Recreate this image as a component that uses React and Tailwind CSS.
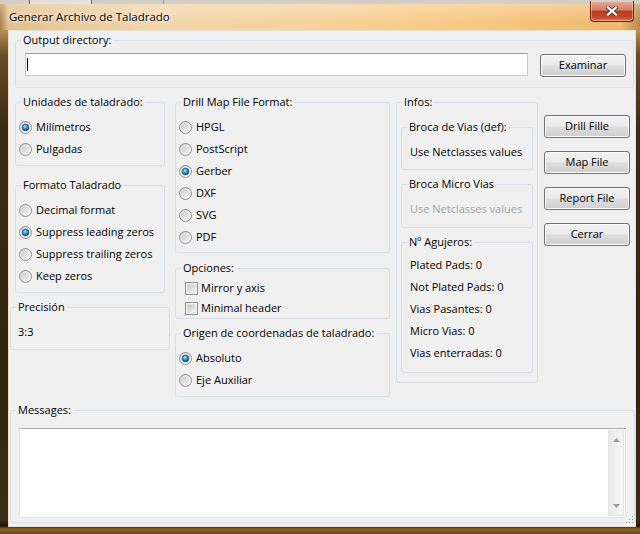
import React from "react";

function Defs() {
  return (
    <svg width="0" height="0" className="absolute">
      <defs>
        <linearGradient id="rb" x1="0" y1="0" x2="1" y2="1">
          <stop offset="0" stopColor="#c4c4c4" />
          <stop offset="1" stopColor="#fbfbfb" />
        </linearGradient>
        <radialGradient id="rd" cx="0.42" cy="0.36" r="0.7">
          <stop offset="0" stopColor="#b4e8ff" />
          <stop offset="0.45" stopColor="#2c96d4" />
          <stop offset="1" stopColor="#0b3a66" />
        </radialGradient>
        <linearGradient id="cb" x1="0" y1="0" x2="1" y2="1">
          <stop offset="0" stopColor="#c3c6cb" />
          <stop offset="1" stopColor="#f6f6f6" />
        </linearGradient>
      </defs>
    </svg>
  );
}

const Radio = ({ checked, label }) => (
  <div className="flex h-[22px] items-center">
    <svg width="13" height="13" viewBox="0 0 13 13" className="shrink-0">
      <circle cx="6.5" cy="6.5" r="6" fill="url(#rb)" stroke="#8e8f8f" />
      <circle cx="6.5" cy="6.5" r="4.7" fill="none" stroke="#ffffff" strokeOpacity="0.6" strokeWidth="0.8" />
      {checked && <circle cx="6.5" cy="6.5" r="3.4" fill="url(#rd)" stroke="#1a4a75" strokeWidth="0.6" />}
    </svg>
    <span className="ml-[4px]">{label}</span>
  </div>
);

const Check = ({ label }) => (
  <div className="flex h-[20px] items-center">
    <svg width="13" height="13" viewBox="0 0 13 13" className="shrink-0">
      <rect x="0.5" y="0.5" width="12" height="12" fill="#f4f4f4" stroke="#8e8f8f" />
      <rect x="2.5" y="2.5" width="8" height="8" fill="url(#cb)" stroke="#d8dadd" strokeWidth="0.6" />
    </svg>
    <span className="ml-[3px]">{label}</span>
  </div>
);

const Btn = ({ children, className = "" }) => (
  <button
    className={
      "flex h-[23px] w-[86px] shrink-0 items-center justify-center rounded-[3px] border border-[#707070] bg-[linear-gradient(180deg,#f2f2f2_0%,#ebebeb_48%,#dddddd_52%,#cfcfcf_100%)] text-black shadow-[inset_0_0_0_1px_#fbfbfb] " +
      className
    }
  >
    {children}
  </button>
);

const Group = ({ label, className = "", children }) => (
  <fieldset className={"shrink-0 rounded-[3px] border border-[#d5dfe5] " + className}>
    <legend className="ml-[5px] h-[16px] px-[2px] leading-[16px]">{label}</legend>
    {children}
  </fieldset>
);

export default function App() {
  return (
    <div className="relative flex h-[534px] w-[640px] flex-col overflow-hidden bg-[linear-gradient(180deg,#dcb781_0px,#b48a55_32px,#6a4b24_55px,#3c2a13_130px,#33240f_380px,#3e2c15_520px,#1f1608_526px,#8a6428_529px,#6a4b1f_534px)] font-['Open_Sans',sans-serif] text-[11px] text-black">
      <Defs />

      {/* window behind, peeking above the title bar */}
      <div className="flex h-[4px] shrink-0 bg-[#d3cec6]">
        <div className="w-[30px] border-r border-[#6a6a6a]" />
        <div className="w-[62px] border-r border-[#6a6a6a] bg-[#e4e1dc]" />
        <div className="w-[72px] border-r border-[#9a9a9a]" />
      </div>

      {/* title bar */}
      <div className="flex h-[26px] shrink-0 items-start rounded-t-[6px] bg-[linear-gradient(180deg,rgba(255,255,255,0.28),rgba(255,255,255,0)_70%),linear-gradient(90deg,#a9804e_0px,#e2c090_8px,#f1d6ac_25%,#f6d29a_50%,#f8c985_72%,#eeb970_97%,#b88a4c_100%)]">
        <span className="ml-[9px] mt-[6px] text-[11.5px] leading-[14px] [text-shadow:0_0_6px_#fff,0_0_3px_#fff]">
          Generar Archivo de Taladrado
        </span>
        <div className="ml-auto mr-[6px] -mt-[3px] flex h-[21px] w-[44px] items-center justify-center rounded-b-[4px] border border-t-0 border-[#6b2414] bg-[linear-gradient(180deg,#e8ab9b_0%,#d77a62_45%,#c0391c_52%,#c44a2a_80%,#d9734d_100%)] shadow-[inset_0_0_0_1px_rgba(255,235,225,0.45)]">
          <svg width="12" height="10" viewBox="0 0 12 10">
            <path d="M2 1.5 L10 8.5 M10 1.5 L2 8.5" stroke="#3b3b3b" strokeWidth="4" strokeLinecap="square" />
            <path d="M2 1.5 L10 8.5 M10 1.5 L2 8.5" stroke="#ffffff" strokeWidth="2.3" strokeLinecap="square" />
          </svg>
        </div>
      </div>

      <div className="flex">
        <div className="w-[8px] shrink-0" />
        {/* client area */}
        <div className="relative flex h-[497px] w-[628px] shrink-0 flex-col border border-[#e9dfcc] bg-[#f0f0f0]">
          <Group label="Output directory:" className="ml-[6px] mt-[1px] w-[619px]">
            <div className="flex h-[39px] items-start pl-[9px] pt-[5px]">
              <div className="flex h-[23px] w-[503px] items-center border border-[#b5cfe7] border-t-[#7fa3c9] bg-white">
                <div className="ml-[1px] h-[13px] w-px bg-black" />
              </div>
              <Btn className="ml-[12px] mt-[1px]">Examinar</Btn>
            </div>
          </Group>

          <div className="mt-[6px] flex items-start">
            {/* units / format / precision */}
            <div className="ml-[6px] flex w-[150px] shrink-0 flex-col items-start">
              <Group label="Unidades de taladrado:" className="w-[150px]">
                <div className="h-[55px] pl-[3px] pt-[6px]">
                  <Radio checked label="Milímetros" />
                  <Radio label="Pulgadas" />
                </div>
              </Group>
              <Group label="Formato Taladrado" className="mt-[11px] w-[150px]">
                <div className="h-[99px] pl-[3px] pt-[6px]">
                  <Radio label="Decimal format" />
                  <Radio checked label="Suppress leading zeros" />
                  <Radio label="Suppress trailing zeros" />
                  <Radio label="Keep zeros" />
                </div>
              </Group>
              <Group label="Precisión" className="-ml-[5px] mt-[6px] w-[160px]">
                <div className="h-[34px] pl-[7px] pt-[6px]">
                  <div className="flex h-[22px] items-center">3:3</div>
                </div>
              </Group>
            </div>

            {/* drill map / options / origin */}
            <div className="ml-[10px] flex w-[215px] shrink-0 flex-col">
              <Group label="Drill Map File Format:" className="w-[215px]">
                <div className="h-[142px] pl-[3px] pt-[6px]">
                  <Radio label="HPGL" />
                  <Radio label="PostScript" />
                  <Radio checked label="Gerber" />
                  <Radio label="DXF" />
                  <Radio label="SVG" />
                  <Radio label="PDF" />
                </div>
              </Group>
              <Group label="Opciones:" className="mt-[7px] w-[215px]">
                <div className="h-[42px] pl-[9px] pt-[2px]">
                  <Check label="Mirror y axis" />
                  <Check label="Minimal header" />
                </div>
              </Group>
              <Group label="Origen de coordenadas de taladrado:" className="mt-[6px] w-[215px]">
                <div className="h-[55px] pl-[3px] pt-[6px]">
                  <Radio checked label="Absoluto" />
                  <Radio label="Eje Auxiliar" />
                </div>
              </Group>
            </div>

            {/* infos */}
            <Group label="Infos:" className="ml-[6px] w-[142px]">
              <div className="flex h-[272px] flex-col pl-[4px] pt-[9px]">
                <Group label="Broca de Vias (def):" className="w-[132px]">
                  <div className="h-[34px] pl-[8px] pt-[6px]">
                    <div className="flex h-[22px] items-center">Use Netclasses values</div>
                  </div>
                </Group>
                <Group label="Broca Micro Vias" className="mt-[6px] w-[132px]">
                  <div className="h-[35px] pl-[8px] pt-[6px]">
                    <div className="flex h-[22px] items-center text-[#a3a3a3]">Use Netclasses values</div>
                  </div>
                </Group>
                <Group label="Nº Agujeros:" className="mt-[6px] w-[132px]">
                  <div className="h-[122px] pl-[8px] pt-[4px]">
                    {["Plated Pads: 0", "Not Plated Pads: 0", "Vias Pasantes: 0", "Micro Vias: 0", "Vias enterradas: 0"].map((t) => (
                      <div key={t} className="flex h-[22px] items-center">
                        {t}
                      </div>
                    ))}
                  </div>
                </Group>
              </div>
            </Group>

            {/* actions */}
            <div className="ml-[6px] mt-[21px] flex flex-col gap-[13px]">
              <Btn>Drill Fille</Btn>
              <Btn>Map File</Btn>
              <Btn>Report File</Btn>
              <Btn>Cerrar</Btn>
            </div>
          </div>

          <Group label="Messages:" className="ml-[1px] mt-[5px] w-[625px]">
            <div className="h-[104px] pl-[8px] pt-[10px]">
              <div className="flex h-[90px] w-[607px] border border-[#dfe2e7] border-t-[#a5a7ab] bg-white">
                <div className="flex-1" />
                <div className="my-[1px] mr-[1px] flex w-[16px] flex-col items-center justify-between border border-[#e4e4e4] bg-[linear-gradient(90deg,#e9e9e9,#f6f6f6)] py-[7px]">
                  <svg width="7" height="4" viewBox="0 0 7 4">
                    <path d="M0 4 L3.5 0 L7 4 Z" fill="#9a9a9a" />
                  </svg>
                  <svg width="7" height="4" viewBox="0 0 7 4">
                    <path d="M0 0 L7 0 L3.5 4 Z" fill="#9a9a9a" />
                  </svg>
                </div>
              </div>
            </div>
          </Group>

          {/* size grip */}
          <svg width="8" height="8" viewBox="0 0 8 8" className="absolute bottom-[2px] right-[1px]">
            {[
              [6, 0],
              [6, 3],
              [3, 3],
              [6, 6],
              [3, 6],
              [0, 6],
            ].map(([x, y]) => (
              <g key={x + "-" + y}>
                <rect x={x + 1} y={y + 1} width="1" height="1" fill="#ffffff" />
                <rect x={x} y={y} width="1" height="1" fill="#a0a0a0" />
              </g>
            ))}
          </svg>
        </div>
      </div>
    </div>
  );
}
